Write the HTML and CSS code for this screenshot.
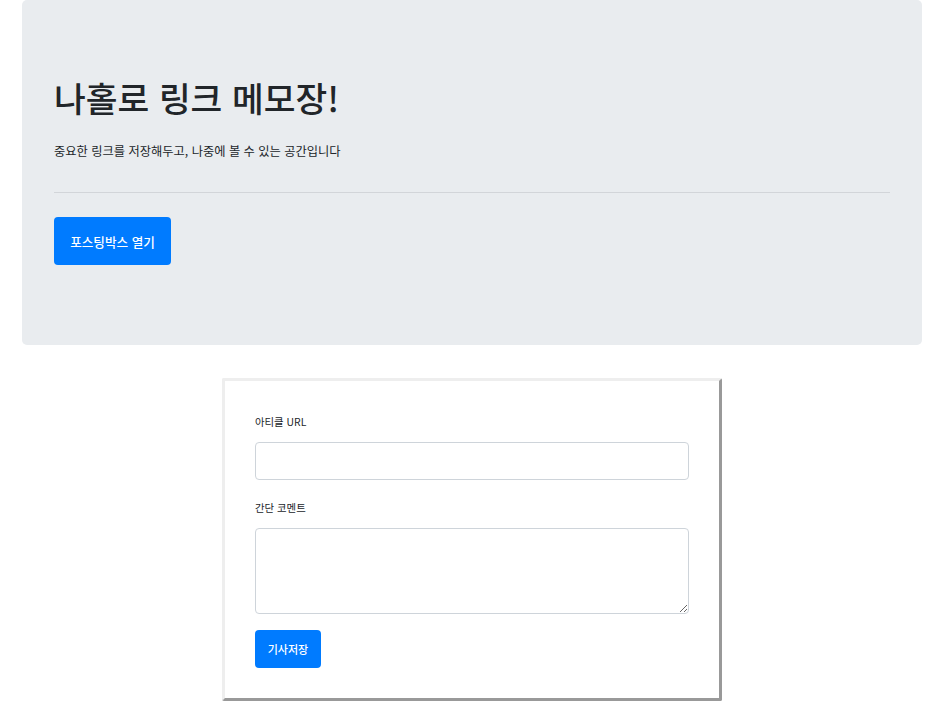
FILE: index.html
```html
<!DOCTYPE html>
<html lang="ko">
<head>
<meta charset="utf-8">
<title>나홀로 링크 메모장!</title>
<link rel="stylesheet" href="styles.css">
</head>
<body>
<main class="page">
  <section class="jumbotron">
    <h1 class="title">나홀로 링크 메모장!</h1>
    <p class="lead">중요한 링크를 저장해두고, 나중에 볼 수 있는 공간입니다</p>
    <hr class="rule">
    <button class="btn btn-lg" type="button">포스팅박스 열기</button>
  </section>
  <form class="post-box">
    <div class="group">
      <label class="label" for="url">아티클 URL</label>
      <input class="control" id="url" type="text">
    </div>
    <div class="group">
      <label class="label" for="comment">간단 코멘트</label>
      <textarea class="control area" id="comment"></textarea>
    </div>
    <button class="btn btn-sm" type="button">기사저장</button>
  </form>
</main>
</body>
</html>
```
FILE: styles.css
```css
* { box-sizing: border-box; }
html, body { margin: 0; background: #fff; overflow-x: hidden; }
body { font-family: "Noto Sans CJK KR", "Noto Sans", sans-serif; color: #212529; }
.page { width: 900px; margin-left: 22px; }
.jumbotron { background: #e9ecef; border-radius: 5px; padding: 64px 32px; height: 345px; }
.title { margin: 0 0 8px; height: 67px; font-size: 34.5px; line-height: 67px; font-weight: 500; }
.lead { margin: 0; height: 29px; font-size: 12.25px; line-height: 25px; font-weight: 400; }
.rule { margin: 24px 0; border: 0; border-top: 1px solid #d2d5d9; }
.btn { display: block; border: 0; border-radius: 4px; background: #007bff; color: #fff; font-family: inherit; padding: 0; }
.btn-lg { width: 117px; height: 48px; font-size: 12.6px; font-weight: 500; }
.btn-sm { width: 66px; height: 38px; font-size: 11px; font-weight: 500; }
.post-box { width: 500px; height: 323px; margin: 33px auto 0; padding: 29px 30px 0; border: 3px solid; border-color: #eee #999 #999 #eee; border-radius: 2px; }
.group { margin-bottom: 16px; }
.label { display: block; height: 24px; margin-bottom: 8px; font-size: 10.4px; line-height: 24px; }
.control { display: block; width: 100%; height: 38px; border: 1px solid #ced4da; border-radius: 4px; background: #fff; padding: 6px 12px; font: inherit; }
.area { height: 86px; }
```
